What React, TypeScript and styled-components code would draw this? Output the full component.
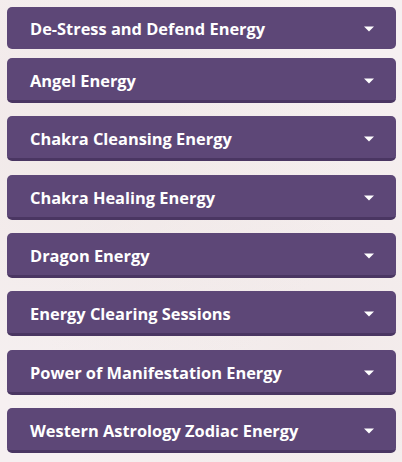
import React from "react";
import styled, { createGlobalStyle } from "styled-components";

const Global = createGlobalStyle`
  html, body {
    margin: 0;
    padding: 0;
    background: #f6f0f1;
  }
  body {
    font-family: "Open Sans", "Liberation Sans", sans-serif;
  }
`;

const Page = styled.div`
  width: 402px;
  height: 462px;
  box-sizing: border-box;
  padding: 7px 6px 0 7px;
  background:
    radial-gradient(ellipse at 20% 30%, rgba(235, 225, 222, 0.5), transparent 60%),
    radial-gradient(ellipse at 80% 75%, rgba(238, 228, 226, 0.5), transparent 60%),
    #f6f0f1;
  overflow: hidden;
`;

const List = styled.div`
  display: flex;
  flex-direction: column;
`;

const Item = styled.div<{ $first?: boolean }>`
  display: flex;
  align-items: center;
  justify-content: space-between;
  box-sizing: border-box;
  height: ${(p) => (p.$first ? "42px" : "45px")};
  margin-bottom: ${(p) => (p.$first ? "9px" : "13.33px")};
  padding: ${(p) => (p.$first ? "2px" : "4px")} 22px 0 23px;
  background: #5d4777;
  border-bottom: ${(p) => (p.$first ? "0" : "3px solid #4a3662")};
  border-radius: 5px;
  color: #ffffff;
`;

const Title = styled.span`
  font-family: "Open Sans", "Liberation Sans", sans-serif;
  font-weight: 700;
  font-size: 16.4px;
  line-height: 22px;
  white-space: nowrap;
`;

const Caret = styled.svg`
  width: 10px;
  height: 6px;
  flex: none;
`;

const items = [
  "De-Stress and Defend Energy",
  "Angel Energy",
  "Chakra Cleansing Energy",
  "Chakra Healing Energy",
  "Dragon Energy",
  "Energy Clearing Sessions",
  "Power of Manifestation Energy",
  "Western Astrology Zodiac Energy",
];

export default function App() {
  return (
    <>
      <Global />
      <Page>
        <List>
          {items.map((t, i) => (
            <Item key={t} $first={i === 0}>
              <Title>{t}</Title>
              <Caret viewBox="0 0 10 6">
                <path d="M0 0.5 H10 L5 5.5 Z" fill="#ffffff" />
              </Caret>
            </Item>
          ))}
        </List>
      </Page>
    </>
  );
}
